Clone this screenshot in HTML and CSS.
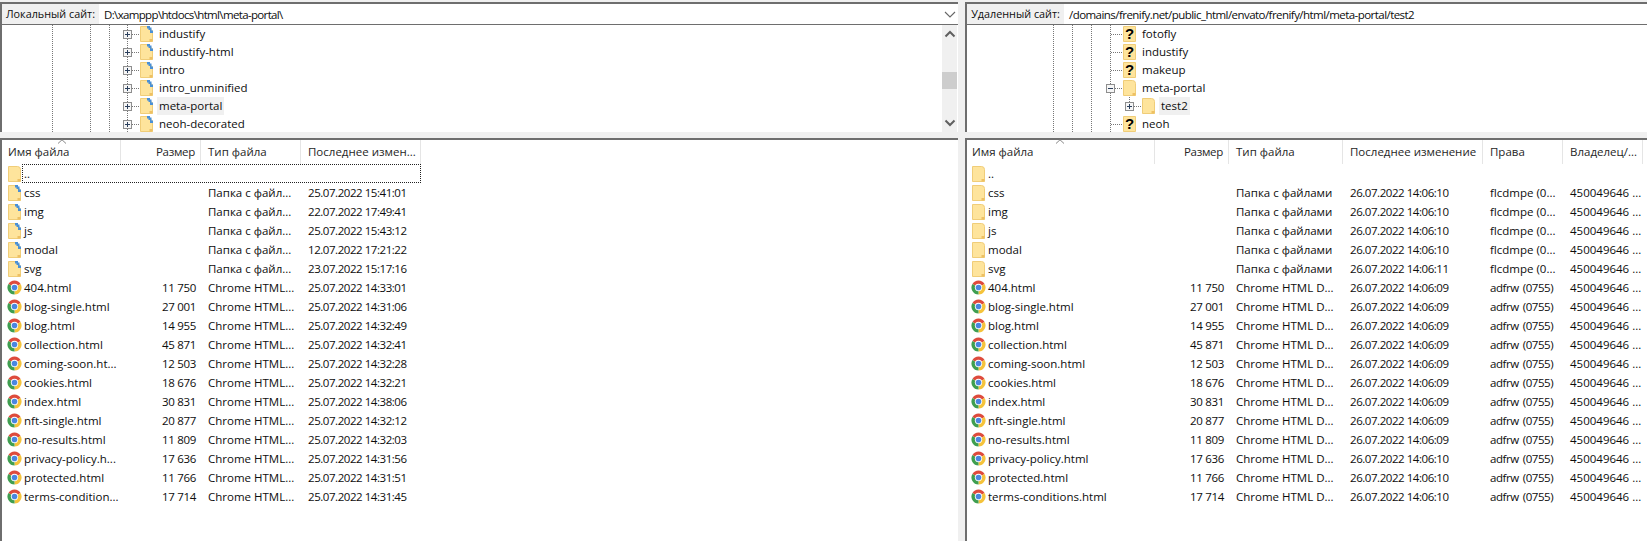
FILE: index.html
```html
<!DOCTYPE html>
<html>
<head>
	<title>FileZilla</title>
	<meta charset="utf-8">
	<link rel="stylesheet" href="styles.css">
</head>
<body>
	<svg class="defs" width="0" height="0">
		<symbol id="folder" viewBox="0 0 13 16">
			<path d="M.5.5H9.5Q12.5.5 12.5 3.5V15.5H.5Z" fill="#fee49c" stroke="#f0cd78"/>
			<path d="M9.5 15.5V13H12.5V15.5Z" fill="#eec063"/>
		</symbol>
		<symbol id="folder-sync" viewBox="0 0 13 16">
			<path d="M.5.5H8L12.5 5V15.5H.5Z" fill="#fee49c" stroke="#f0cd78"/>
			<path d="M9.5 15.5V13H12.5V15.5Z" fill="#eec063"/>
			<path d="M7 0H10V1.500H11.500V4.500H13V7H10V4H8.500V2.500H7Z" fill="#4a90d6"/>
		</symbol>
		<symbol id="folder-unknown" viewBox="0 0 13 16">
			<path d="M.5.5H12.500V15.500H.5Z" fill="#fee49c" stroke="#f0cd78"/>
		</symbol>
		<symbol id="chrome" viewBox="0 0 16 16">
			<path d="M8 8L1.500 4.250A7.500 7.500 0 0 1 14.500 4.250Z" fill="#de4b3c"/>
			<path d="M8 8L14.500 4.250A7.500 7.500 0 0 1 8 15.500Z" fill="#f5c33b"/>
			<path d="M8 8L8 15.500A7.500 7.500 0 0 1 1.500 4.250Z" fill="#3f9e50"/>
			<circle cx="8" cy="8" r="3.900" fill="#fff"/>
			<circle cx="8" cy="8" r="3" fill="#4a86e0"/>
		</symbol>
	</svg>

	<div class="panes">
		<!-- local side -->
		<section class="pane pane-local">
			<div class="address">
				<span class="address-label">Локальный сайт:</span>
				<span class="address-value">D:\xamppp\htdocs\html\meta-portal\</span>
				<svg class="combo-arrow" width="12" height="7" viewBox="0 0 12 7"><path d="M1 1L6 6L11 1" fill="none" stroke="#666" stroke-width="1.100"/></svg>
			</div>
			<div class="tree-box">
				<div class="tree tree-local">
					<div class="node"><i class="twist plus"></i><i class="dots"></i><svg class="ticon"><use href="#folder-sync"/></svg><span class="node-name">industify</span></div>
					<div class="node"><i class="twist plus"></i><i class="dots"></i><svg class="ticon"><use href="#folder-sync"/></svg><span class="node-name">industify-html</span></div>
					<div class="node"><i class="twist plus"></i><i class="dots"></i><svg class="ticon"><use href="#folder-sync"/></svg><span class="node-name">intro</span></div>
					<div class="node"><i class="twist plus"></i><i class="dots"></i><svg class="ticon"><use href="#folder-sync"/></svg><span class="node-name">intro_unminified</span></div>
					<div class="node"><i class="twist plus"></i><i class="dots"></i><svg class="ticon"><use href="#folder-sync"/></svg><span class="node-name selected">meta-portal</span></div>
					<div class="node"><i class="twist plus"></i><i class="dots"></i><svg class="ticon"><use href="#folder-sync"/></svg><span class="node-name">neoh-decorated</span></div>
				</div>
				<div class="scrollbar">
					<svg width="12" height="8" viewBox="0 0 12 8"><path d="M1.500 6.500L6 2L10.500 6.500" fill="none" stroke="#606060" stroke-width="2"/></svg>
					<div class="scroll-track"><div class="scroll-thumb"></div></div>
					<svg width="12" height="8" viewBox="0 0 12 8"><path d="M1.500 1.500L6 6L10.500 1.500" fill="none" stroke="#606060" stroke-width="2"/></svg>
				</div>
			</div>
			<div class="splitter"></div>
			<div class="list">
				<div class="row head">
					<span class="c-name">Имя файла<svg class="sort" width="10" height="5" viewBox="0 0 10 5"><path d="M1 4.500L5 .8L9 4.500" fill="none" stroke="#888"/></svg></span><span class="c-size">Размер</span><span>Тип файла</span><span>Последнее измен...</span>
				</div>
				<div class="row focused"><span class="c-name"><svg class="ficon"><use href="#folder"/></svg>..</span><span class="c-size"></span><span></span><span></span></div>
				<div class="row"><span class="c-name"><svg class="ficon"><use href="#folder-sync"/></svg>css</span><span class="c-size"></span><span>Папка с файл...</span><span>25.07.2022 15:41:01</span></div>
				<div class="row"><span class="c-name"><svg class="ficon"><use href="#folder-sync"/></svg>img</span><span class="c-size"></span><span>Папка с файл...</span><span>22.07.2022 17:49:41</span></div>
				<div class="row"><span class="c-name"><svg class="ficon"><use href="#folder-sync"/></svg>js</span><span class="c-size"></span><span>Папка с файл...</span><span>25.07.2022 15:43:12</span></div>
				<div class="row"><span class="c-name"><svg class="ficon"><use href="#folder-sync"/></svg>modal</span><span class="c-size"></span><span>Папка с файл...</span><span>12.07.2022 17:21:22</span></div>
				<div class="row"><span class="c-name"><svg class="ficon"><use href="#folder-sync"/></svg>svg</span><span class="c-size"></span><span>Папка с файл...</span><span>23.07.2022 15:17:16</span></div>
				<div class="row"><span class="c-name"><svg class="ficon chrome"><use href="#chrome"/></svg>404.html</span><span class="c-size">11 750</span><span>Chrome HTML...</span><span>25.07.2022 14:33:01</span></div>
				<div class="row"><span class="c-name"><svg class="ficon chrome"><use href="#chrome"/></svg>blog-single.html</span><span class="c-size">27 001</span><span>Chrome HTML...</span><span>25.07.2022 14:31:06</span></div>
				<div class="row"><span class="c-name"><svg class="ficon chrome"><use href="#chrome"/></svg>blog.html</span><span class="c-size">14 955</span><span>Chrome HTML...</span><span>25.07.2022 14:32:49</span></div>
				<div class="row"><span class="c-name"><svg class="ficon chrome"><use href="#chrome"/></svg>collection.html</span><span class="c-size">45 871</span><span>Chrome HTML...</span><span>25.07.2022 14:32:41</span></div>
				<div class="row"><span class="c-name"><svg class="ficon chrome"><use href="#chrome"/></svg>coming-soon.ht...</span><span class="c-size">12 503</span><span>Chrome HTML...</span><span>25.07.2022 14:32:28</span></div>
				<div class="row"><span class="c-name"><svg class="ficon chrome"><use href="#chrome"/></svg>cookies.html</span><span class="c-size">18 676</span><span>Chrome HTML...</span><span>25.07.2022 14:32:21</span></div>
				<div class="row"><span class="c-name"><svg class="ficon chrome"><use href="#chrome"/></svg>index.html</span><span class="c-size">30 831</span><span>Chrome HTML...</span><span>25.07.2022 14:38:06</span></div>
				<div class="row"><span class="c-name"><svg class="ficon chrome"><use href="#chrome"/></svg>nft-single.html</span><span class="c-size">20 877</span><span>Chrome HTML...</span><span>25.07.2022 14:32:12</span></div>
				<div class="row"><span class="c-name"><svg class="ficon chrome"><use href="#chrome"/></svg>no-results.html</span><span class="c-size">11 809</span><span>Chrome HTML...</span><span>25.07.2022 14:32:03</span></div>
				<div class="row"><span class="c-name"><svg class="ficon chrome"><use href="#chrome"/></svg>privacy-policy.h...</span><span class="c-size">17 636</span><span>Chrome HTML...</span><span>25.07.2022 14:31:56</span></div>
				<div class="row"><span class="c-name"><svg class="ficon chrome"><use href="#chrome"/></svg>protected.html</span><span class="c-size">11 766</span><span>Chrome HTML...</span><span>25.07.2022 14:31:51</span></div>
				<div class="row"><span class="c-name"><svg class="ficon chrome"><use href="#chrome"/></svg>terms-condition...</span><span class="c-size">17 714</span><span>Chrome HTML...</span><span>25.07.2022 14:31:45</span></div>
			</div>
		</section>

		<!-- remote side -->
		<section class="pane pane-remote">
			<div class="address">
				<span class="address-label">Удаленный сайт:</span>
				<span class="address-value">/domains/frenify.net/public_html/envato/frenify/html/meta-portal/test2</span>
			</div>
			<div class="tree-box">
				<div class="tree tree-remote">
					<div class="node"><i class="twist"></i><i class="dots long"></i><svg class="ticon" viewBox="0 0 13 16"><use href="#folder-unknown"/><text x="6.500" y="13" text-anchor="middle" class="unknown-mark">?</text></svg><span class="node-name">fotofly</span></div>
					<div class="node"><i class="twist"></i><i class="dots long"></i><svg class="ticon" viewBox="0 0 13 16"><use href="#folder-unknown"/><text x="6.500" y="13" text-anchor="middle" class="unknown-mark">?</text></svg><span class="node-name">industify</span></div>
					<div class="node"><i class="twist"></i><i class="dots long"></i><svg class="ticon" viewBox="0 0 13 16"><use href="#folder-unknown"/><text x="6.500" y="13" text-anchor="middle" class="unknown-mark">?</text></svg><span class="node-name">makeup</span></div>
					<div class="node"><i class="twist minus"></i><i class="dots"></i><svg class="ticon"><use href="#folder"/></svg><span class="node-name">meta-portal</span></div>
					<div class="node child"><i class="twist plus"></i><i class="dots"></i><svg class="ticon"><use href="#folder"/></svg><span class="node-name selected">test2</span></div>
					<div class="node"><i class="twist"></i><i class="dots long"></i><svg class="ticon" viewBox="0 0 13 16"><use href="#folder-unknown"/><text x="6.500" y="13" text-anchor="middle" class="unknown-mark">?</text></svg><span class="node-name">neoh</span></div>
				</div>
			</div>
			<div class="splitter"></div>
			<div class="list">
				<div class="row head">
					<span class="c-name">Имя файла<svg class="sort" width="10" height="5" viewBox="0 0 10 5"><path d="M1 4.500L5 .8L9 4.500" fill="none" stroke="#888"/></svg></span><span class="c-size">Размер</span><span>Тип файла</span><span>Последнее изменение</span><span>Права</span><span>Владелец/...</span>
				</div>
				<div class="row"><span class="c-name"><svg class="ficon"><use href="#folder"/></svg>..</span><span class="c-size"></span><span></span><span></span><span></span><span></span></div>
				<div class="row"><span class="c-name"><svg class="ficon"><use href="#folder"/></svg>css</span><span class="c-size"></span><span>Папка с файлами</span><span>26.07.2022 14:06:10</span><span>flcdmpe (0...</span><span>450049646 ...</span></div>
				<div class="row"><span class="c-name"><svg class="ficon"><use href="#folder"/></svg>img</span><span class="c-size"></span><span>Папка с файлами</span><span>26.07.2022 14:06:10</span><span>flcdmpe (0...</span><span>450049646 ...</span></div>
				<div class="row"><span class="c-name"><svg class="ficon"><use href="#folder"/></svg>js</span><span class="c-size"></span><span>Папка с файлами</span><span>26.07.2022 14:06:10</span><span>flcdmpe (0...</span><span>450049646 ...</span></div>
				<div class="row"><span class="c-name"><svg class="ficon"><use href="#folder"/></svg>modal</span><span class="c-size"></span><span>Папка с файлами</span><span>26.07.2022 14:06:10</span><span>flcdmpe (0...</span><span>450049646 ...</span></div>
				<div class="row"><span class="c-name"><svg class="ficon"><use href="#folder"/></svg>svg</span><span class="c-size"></span><span>Папка с файлами</span><span>26.07.2022 14:06:11</span><span>flcdmpe (0...</span><span>450049646 ...</span></div>
				<div class="row"><span class="c-name"><svg class="ficon chrome"><use href="#chrome"/></svg>404.html</span><span class="c-size">11 750</span><span>Chrome HTML D...</span><span>26.07.2022 14:06:09</span><span class="c-perm">adfrw (0755)</span><span>450049646 ...</span></div>
				<div class="row"><span class="c-name"><svg class="ficon chrome"><use href="#chrome"/></svg>blog-single.html</span><span class="c-size">27 001</span><span>Chrome HTML D...</span><span>26.07.2022 14:06:09</span><span class="c-perm">adfrw (0755)</span><span>450049646 ...</span></div>
				<div class="row"><span class="c-name"><svg class="ficon chrome"><use href="#chrome"/></svg>blog.html</span><span class="c-size">14 955</span><span>Chrome HTML D...</span><span>26.07.2022 14:06:09</span><span class="c-perm">adfrw (0755)</span><span>450049646 ...</span></div>
				<div class="row"><span class="c-name"><svg class="ficon chrome"><use href="#chrome"/></svg>collection.html</span><span class="c-size">45 871</span><span>Chrome HTML D...</span><span>26.07.2022 14:06:09</span><span class="c-perm">adfrw (0755)</span><span>450049646 ...</span></div>
				<div class="row"><span class="c-name"><svg class="ficon chrome"><use href="#chrome"/></svg>coming-soon.html</span><span class="c-size">12 503</span><span>Chrome HTML D...</span><span>26.07.2022 14:06:09</span><span class="c-perm">adfrw (0755)</span><span>450049646 ...</span></div>
				<div class="row"><span class="c-name"><svg class="ficon chrome"><use href="#chrome"/></svg>cookies.html</span><span class="c-size">18 676</span><span>Chrome HTML D...</span><span>26.07.2022 14:06:09</span><span class="c-perm">adfrw (0755)</span><span>450049646 ...</span></div>
				<div class="row"><span class="c-name"><svg class="ficon chrome"><use href="#chrome"/></svg>index.html</span><span class="c-size">30 831</span><span>Chrome HTML D...</span><span>26.07.2022 14:06:09</span><span class="c-perm">adfrw (0755)</span><span>450049646 ...</span></div>
				<div class="row"><span class="c-name"><svg class="ficon chrome"><use href="#chrome"/></svg>nft-single.html</span><span class="c-size">20 877</span><span>Chrome HTML D...</span><span>26.07.2022 14:06:09</span><span class="c-perm">adfrw (0755)</span><span>450049646 ...</span></div>
				<div class="row"><span class="c-name"><svg class="ficon chrome"><use href="#chrome"/></svg>no-results.html</span><span class="c-size">11 809</span><span>Chrome HTML D...</span><span>26.07.2022 14:06:09</span><span class="c-perm">adfrw (0755)</span><span>450049646 ...</span></div>
				<div class="row"><span class="c-name"><svg class="ficon chrome"><use href="#chrome"/></svg>privacy-policy.html</span><span class="c-size">17 636</span><span>Chrome HTML D...</span><span>26.07.2022 14:06:10</span><span class="c-perm">adfrw (0755)</span><span>450049646 ...</span></div>
				<div class="row"><span class="c-name"><svg class="ficon chrome"><use href="#chrome"/></svg>protected.html</span><span class="c-size">11 766</span><span>Chrome HTML D...</span><span>26.07.2022 14:06:10</span><span class="c-perm">adfrw (0755)</span><span>450049646 ...</span></div>
				<div class="row"><span class="c-name"><svg class="ficon chrome"><use href="#chrome"/></svg>terms-conditions.html</span><span class="c-size">17 714</span><span>Chrome HTML D...</span><span>26.07.2022 14:06:10</span><span class="c-perm">adfrw (0755)</span><span>450049646 ...</span></div>
			</div>
		</section>
	</div>
</body>
</html>
```

FILE: styles.css
```css
html, body {
	margin: 0;
	height: 541px;
	overflow: hidden;
}
body {
	font-family: "Open Sans", "Noto Sans", sans-serif;
	font-size: 11.5px;
	color: #0d0d0d;
	background-color: #f0f0f0;
}
.defs {
	position: absolute;
}
.unknown-mark {
	font-family: "Liberation Sans", sans-serif;
	font-size: 15px;
	font-weight: bold;
	fill: #000;
}
.panes {
	display: flex;
	gap: 7px;
	height: 539px;
	padding-top: 2px;
}
.pane {
	display: flex;
	flex-direction: column;
}
.pane-local {
	width: 958px;
}
.pane-remote {
	width: 682px;
}

/* address bar */
.address {
	display: flex;
	align-items: center;
	height: 20px;
	border-top: 2px solid #6e6e6e;
	border-left: 2px solid #6e6e6e;
	border-bottom: 1px solid #6e6e6e;
	background-color: #fff;
}
.address-label {
	width: 97px;
	height: 20px;
	font-size: 10.8px;
	line-height: 20px;
	text-align: center;
	white-space: nowrap;
	background-color: #f0f0f0;
}
.address-value {
	flex: 1;
	padding-left: 5px;
	letter-spacing: -.55px;
}
.pane-local .address-value {
	letter-spacing: -.65px;
}
.combo-arrow {
	margin-right: 2px;
}

/* directory tree */
.tree-box {
	display: flex;
	height: 107px;
	border-left: 2px solid #6e6e6e;
	background-color: #fff;
	overflow: hidden;
}
.tree {
	flex: 1;
	background-image:
		linear-gradient(#777 50%, transparent 50%),
		linear-gradient(#777 50%, transparent 50%),
		linear-gradient(#777 50%, transparent 50%),
		linear-gradient(#777 50%, transparent 50%);
	background-repeat: repeat-y;
	background-size: 1px 2px;
}
.tree-local {
	background-position: 50px 0, 88px 0, 107px 0, 125px 0;
}
.tree-remote {
	background-position: 86px 0, 105px 0, 124px 0, 143px 0;
}
.node {
	display: flex;
	align-items: center;
	height: 18px;
}
.tree-local .node {
	padding-left: 121px;
}
.tree-remote .node {
	padding-left: 139px;
}
.tree-remote .node.child {
	position: relative;
	padding-left: 158px;
}
.node.child::before {
	content: "";
	position: absolute;
	left: 162px;
	top: 0;
	width: 1px;
	height: 5px;
	background-image: linear-gradient(#777 50%, transparent 50%);
	background-size: 1px 2px;
}
.twist {
	position: relative;
	flex: none;
	box-sizing: border-box;
	width: 9px;
	height: 9px;
}
.twist.plus, .twist.minus {
	border: 1px solid #8e8e8e;
	background-color: #f6f6f6;
}
.twist.plus::before, .twist.minus::before {
	content: "";
	position: absolute;
	left: 1px;
	top: 3px;
	width: 5px;
	height: 1px;
	background-color: #2b3f5c;
}
.twist.plus::after {
	content: "";
	position: absolute;
	left: 3px;
	top: 1px;
	width: 1px;
	height: 5px;
	background-color: #2b3f5c;
}
.dots {
	flex: none;
	width: 8px;
	height: 1px;
	background-image: linear-gradient(90deg, #777 50%, transparent 50%);
	background-size: 2px 1px;
}
.dots.long {
	margin-left: -4px;
	width: 12px;
}
.ticon {
	flex: none;
	width: 13px;
	height: 16px;
}
.node-name {
	margin-left: 4px;
	height: 18px;
	line-height: 18px;
	padding: 0 2px;
	white-space: nowrap;
}
.node-name.selected {
	background-color: #f0f0f0;
}
.scrollbar {
	display: flex;
	flex-direction: column;
	align-items: center;
	justify-content: space-between;
	flex: none;
	width: 15px;
	height: 100%;
	margin-right: 1px;
	padding: 5px 0;
	box-sizing: border-box;
	background-color: #f0f0f0;
}
.scroll-track {
	flex: 1;
	width: 15px;
	position: relative;
}
.scroll-thumb {
	width: 15px;
	height: 17px;
	margin-top: 34px;
	background-color: #cdcdcd;
}
.splitter {
	height: 6px;
}

/* file list */
.list {
	flex: 1;
	border-top: 2px solid #6e6e6e;
	border-left: 2px solid #6e6e6e;
	background-color: #fff;
}
.row {
	display: grid;
	align-items: center;
	height: 19px;
	line-height: 19px;
	white-space: nowrap;
}
.pane-local .row {
	grid-template-columns: 119px 80px 100px 120px;
}
.pane-remote .row {
	grid-template-columns: 188px 74px 114px 140px 80px 80px;
}
.row span {
	display: block;
	height: 100%;
	box-sizing: border-box;
	padding-left: 7px;
	overflow: hidden;
}
.row .c-name {
	display: flex;
	align-items: center;
	padding-left: 6px;
}
.pane-remote .row .c-name {
	padding-left: 5px;
}
.row .c-size {
	padding-left: 0;
	padding-right: 5px;
	text-align: right;
	letter-spacing: -.3px;
}
/* digits are narrower in the original font */
.row:not(.head) span:nth-child(4) {
	letter-spacing: -.45px;
}
.row .c-perm {
	letter-spacing: -.45px;
	word-spacing: 1.5px;
}
.ficon {
	flex: none;
	width: 13px;
	height: 16px;
	margin-right: 3px;
}
.ficon.chrome {
	width: 15px;
	height: 15px;
	margin-left: -1px;
	margin-right: 2px;
}
.head {
	height: 24px;
	line-height: 24px;
	color: #262626;
}
.head.row span {
	border-right: 1px solid #e5e5e5;
}
.head.row .c-name {
	position: relative;
	overflow: visible;
}
.sort {
	position: absolute;
	left: 55px;
	top: -1px;
}
.pane-remote .sort {
	left: 88px;
}
.focused {
	width: 399px;
	margin-left: 20px;
	outline: 1px dotted #222;
	outline-offset: -1px;
	grid-template-columns: 99px 80px 100px 120px !important;
}
.focused .c-name {
	padding-left: 0 !important;
	overflow: visible !important;
}
.focused .ficon {
	margin-left: -14px;
}
```
